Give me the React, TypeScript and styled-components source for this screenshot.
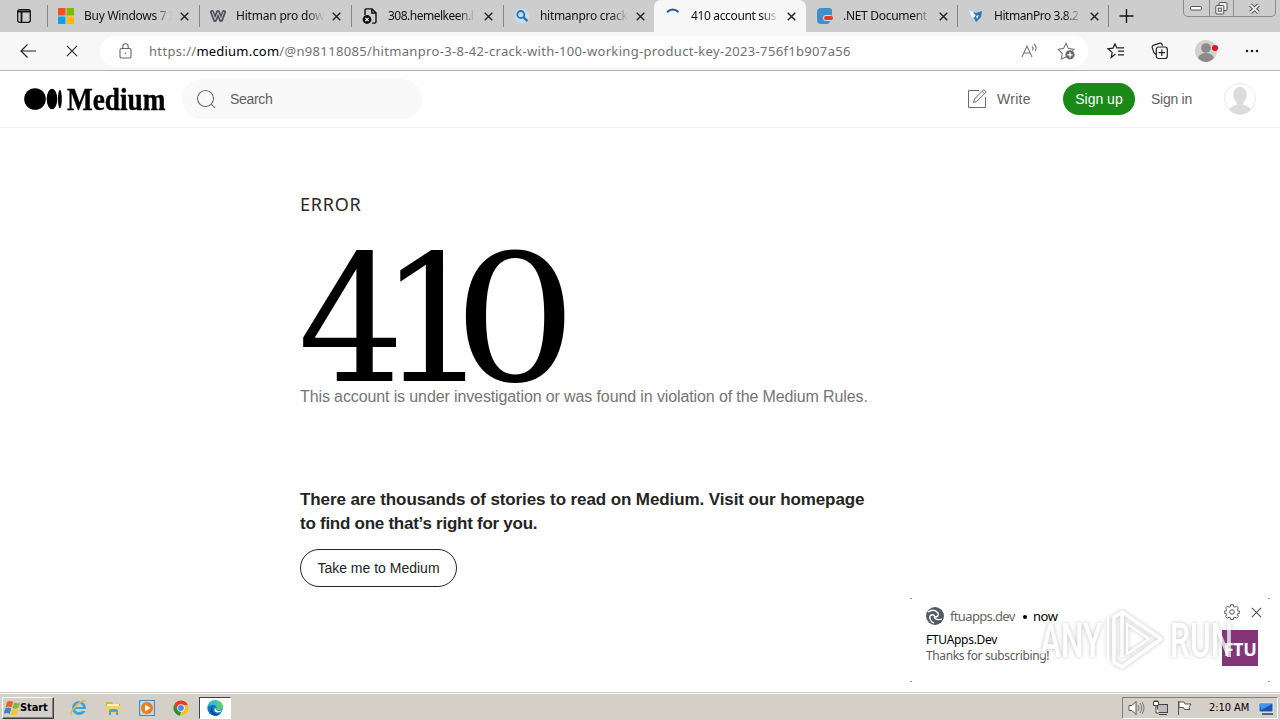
import React from 'react';
import styled, { createGlobalStyle, css } from 'styled-components';

const Global = createGlobalStyle`
  * { box-sizing: border-box; }
  body { margin: 0; background: #fff; overflow: hidden; }
`;

const ui = `'Noto Sans', 'Open Sans', sans-serif`;
const sans = `'Liberation Sans', Arial, sans-serif`;

const Screen = styled.div`
  width: 1280px;
  height: 720px;
  display: flex;
  flex-direction: column;
  background: #fff;
  overflow: hidden;
  position: relative;
  font-family: ${sans};
`;

/* Browser tabs */
const TabStrip = styled.div`
  height: 32px;
  flex: none;
  display: flex;
  background: #cdcdcd;
  font: 12px ${ui};
`;
const TabActions = styled.div`
  width: 47px;
  flex: none;
  padding: 9px 0 0 17px;
`;
const Tab = styled.div<{ $active?: boolean; $line?: boolean; $w: number }>`
  width: ${p => p.$w}px;
  flex: none;
  height: 32px;
  display: flex;
  align-items: center;
  padding-left: 10px;
  border-left: 1px solid transparent;
  ${p => p.$line && css`
    border-image: linear-gradient(#cdcdcd 6px, #858585 6px, #858585 26px, #cdcdcd 26px) 1;
  `}
  ${p => p.$active && css`
    background: #f7f7f7;
    border-radius: 7px 7px 0 0;
  `}
`;
const TabIcon = styled.span`
  width: 16px;
  height: 16px;
  flex: none;
  display: flex;
`;
const TabTitle = styled.span<{ $ls?: number }>`
  width: 88px;
  flex: none;
  margin-left: 10px;
  white-space: nowrap;
  color: #111;
  line-height: 18px;
  letter-spacing: ${p => p.$ls ?? 0}px;
  mask-image: linear-gradient(90deg, #000 80%, transparent 100%);
`;
const TabClose = styled.span`
  width: 12px;
  height: 12px;
  margin-left: 8px;
  display: flex;
  align-items: center;
`;
const NewTab = styled.div`
  width: 75px;
  flex: none;
  padding: 9px 0 0 10px;
  border-left: 1px solid;
  border-image: linear-gradient(#cdcdcd 6px, #858585 6px, #858585 26px, #cdcdcd 26px) 1;
`;
const WindowButtons = styled.div`
  width: 93px;
  height: 17px;
  display: flex;
  border: 1px solid #8b8b8b;
  border-top: 0;
  border-radius: 0 0 5px 5px;
`;
const WindowButton = styled.div<{ $w: number }>`
  width: ${p => p.$w}px;
  display: flex;
  align-items: center;
  justify-content: center;
  & + & { border-left: 1px solid #8b8b8b; }
`;

/* Browser toolbar */
const Toolbar = styled.div`
  height: 39px;
  flex: none;
  display: flex;
  align-items: center;
  background: #f7f7f7;
  border-bottom: 1px solid #b4b4b4;
  padding-left: 18px;
`;
const NavIcon = styled.span<{ $w?: number; $gap?: number }>`
  width: ${p => p.$w ?? 20}px;
  height: 20px;
  flex: none;
  margin-right: ${p => p.$gap ?? 0}px;
  display: flex;
  align-items: center;
  justify-content: center;
`;
const Address = styled.div`
  width: 988px;
  height: 31px;
  display: flex;
  align-items: center;
  background: #fff;
  border-radius: 16px;
  padding-left: 16px;
  margin-right: 18px;
`;
const Url = styled.span`
  flex: 1;
  margin-left: 13px;
  font: 13px/18px ${ui};
  letter-spacing: 0.335px;
  color: #707070;
  white-space: nowrap;
  b { font-weight: 400; color: #000; letter-spacing: 0.2px; }
`;

/* Site header */
const Header = styled.header`
  height: 57px;
  flex: none;
  display: flex;
  align-items: center;
  border-bottom: 1px solid #f2f2f2;
  padding: 0 24px;
`;
const Wordmark = styled.span`
  width: 98px;
  height: 31px;
  margin-left: 5px;
  font: bold 31px/32px 'Liberation Serif', serif;
  color: #000;
  transform: scaleX(0.88);
  transform-origin: 0 50%;
  -webkit-text-stroke: 0.4px #000;
`;
const SearchBox = styled.div`
  width: 240px;
  height: 40px;
  margin-left: 17px;
  padding-left: 12px;
  display: flex;
  align-items: center;
  gap: 12px;
  border-radius: 20px;
  background: #f9f9f9;
`;
const SmallText = styled.span<{ $ls?: number }>`
  font: 14px/20px ${sans};
  letter-spacing: ${p => p.$ls ?? 0}px;
  color: #5f5f5f;
  white-space: nowrap;
`;
const WriteLink = styled.div`
  display: flex;
  align-items: center;
  gap: 8px;
  margin-left: auto;
  width: 98px;
`;
const SignUp = styled.div`
  width: 72px;
  height: 32px;
  border-radius: 16px;
  background: #1a8917;
  color: #fff;
  font: 14px/32px ${sans};
  text-align: center;
  margin-right: 16px;
`;
const Avatar = styled.div`
  width: 32px;
  height: 32px;
  margin-left: 32px;
`;

/* Error page */
const Main = styled.main`
  flex: 1;
  padding: 63px 0 0 300px;
`;
const ErrorLabel = styled.div`
  font: 18px/26px ${ui};
  letter-spacing: 0.75px;
  color: #292929;
`;
const ErrorCode = styled.div`
  display: flex;
  height: 168px;
  margin: 12px 0 0 -2px;
  font: 176px/184px 'DejaVu Serif', serif;
  color: #000;
`;
const Digit = styled.span<{ $w: number; $stretch: number }>`
  width: ${p => p.$w}px;
  flex: none;
  transform: scaleX(${p => p.$stretch});
  transform-origin: 0 50%;
`;
const Reason = styled.div`
  font: 16px/24px ${sans};
  letter-spacing: -0.115px;
  color: #757575;
  white-space: nowrap;
  margin-top: -12px;
`;
const Invite = styled.div`
  margin-top: 79px;
  font: bold 17px/24px ${sans};
  letter-spacing: -0.1px;
  color: #242424;
  white-space: nowrap;
`;
const InviteEnd = styled.span`
  letter-spacing: -0.26px;
`;
const HomeButton = styled.div`
  width: 157px;
  height: 38px;
  margin-top: 13px;
  border: 1px solid #242424;
  border-radius: 19px;
  font: 14px/36px ${sans};
  color: #242424;
  text-align: center;
`;

/* Desktop notification */
const Toast = styled.aside`
  position: absolute;
  left: 910px;
  top: 598px;
  width: 360px;
  height: 84px;
  background:
    linear-gradient(#999, #999) 0 0 / 2px 1px,
    linear-gradient(#999, #999) 100% 0 / 2px 1px,
    linear-gradient(#999, #999) 0 100% / 2px 1px,
    linear-gradient(#999, #999) 100% 100% / 2px 1px,
    #fff;
  background-repeat: no-repeat;
  padding: 7px 10px 0 16px;
  display: flex;
  justify-content: space-between;
`;
const ToastOrigin = styled.div`
  display: flex;
  align-items: center;
  height: 21px;
  font: 13px/20px ${ui};
  color: #666;
  svg { margin-right: 6px; }
`;
const ToastSite = styled.span`
  width: 73px;
  letter-spacing: -0.65px;
`;
const ToastTime = styled.span`
  display: flex;
  gap: 6px;
  color: #000;
  letter-spacing: -0.5px;
  &::before {
    content: '';
    width: 4px;
    height: 4px;
    margin-top: 9px;
    border-radius: 50%;
    background: #000;
  }
`;
const ToastTitle = styled.div`
  font: 12px/16px ${ui};
  letter-spacing: -0.3px;
  color: #000;
  margin-top: 6px;
`;
const ToastBody = styled.div`
  font: 12px/15px ${ui};
  letter-spacing: -0.37px;
  color: #5c5c5c;
`;
const ToastSide = styled.div`
  width: 38px;
`;
const ToastControls = styled.div`
  display: flex;
  align-items: center;
  justify-content: space-between;
  width: 40px;
  height: 14px;
  padding-left: 2px;
  margin-bottom: 11px;
`;
const SiteBadge = styled.div`
  width: 36px;
  height: 36px;
  background: #843578;
  color: #fff;
  font: bold 18px/38px 'Open Sans', sans-serif;
  letter-spacing: -0.4px;
  text-align: center;
`;
const Watermark = styled.div`
  position: absolute;
  left: 1040px;
  top: 606px;
  width: 192px;
  height: 68px;
  display: flex;
  justify-content: space-between;
  align-items: center;
  filter: drop-shadow(0 0 2px rgba(90, 90, 90, 0.5));
  opacity: 0.72;
`;
const WatermarkWord = styled.span`
  width: 62px;
  height: 50px;
  font: 500 48px/52px Roboto, sans-serif;
  color: #fff;
  white-space: nowrap;
  transform: scaleX(0.66);
  transform-origin: 0 50%;
`;

/* Taskbar */
const Taskbar = styled.footer`
  height: 28px;
  flex: none;
  display: flex;
  align-items: center;
  background: #d4d0c8;
  border-top: 1px solid #d4d0c8;
  box-shadow: inset 0 1px #fff;
  padding: 2px 2px 0;
`;
const Start = styled.div`
  width: 52px;
  height: 22px;
  display: flex;
  align-items: center;
  margin-right: 8px;
  padding-left: 1px;
  border: 1px solid;
  border-color: #fff #404040 #404040 #fff;
  box-shadow: inset -1px -1px #808080;
  font: bold 11px/20px 'DejaVu Sans Condensed', 'DejaVu Sans', sans-serif;
  letter-spacing: -0.1px;
  color: #000;
`;
const StartLabel = styled.span`
  margin-left: -1px;
`;
const Launch = styled.span<{ $active?: boolean }>`
  width: 34px;
  height: 22px;
  display: flex;
  align-items: center;
  justify-content: center;
  ${p => p.$active && css`
    width: 32px;
    margin-left: 1px;
    background: #fff;
    border: 1px solid;
    border-color: #404040 #fff #fff #404040;
  `}
`;
const Tray = styled.div`
  width: 156px;
  height: 22px;
  margin-left: auto;
  display: flex;
  align-items: center;
  border: 1px solid;
  border-color: #808080 #fff #fff #808080;
  padding: 0 1px 0 5px;
  gap: 7px;
`;
const Clock = styled.span`
  width: 42px;
  margin-left: 9px;
  font: 11px/20px 'DejaVu Sans Condensed', sans-serif;
  letter-spacing: -0.05px;
  color: #000;
  white-space: nowrap;
`;

type CrossProps = { size?: number; color?: string; width?: number };
const Cross = ({ size = 10, color = '#222', width = 1.6 }: CrossProps) => (
  <svg width={size} height={size} viewBox="0 0 10 10" stroke={color} strokeWidth={width} fill="none">
    <path d="M.8.8l8.4 8.4M9.2.8L.8 9.2" />
  </svg>
);

const icons = {
  windows: (
    <svg width="16" height="16"><path fill="#f25022" d="M0 0h7.5v7.5H0z" /><path fill="#7fba00" d="M8.5 0H16v7.5H8.5z" /><path fill="#00a4ef" d="M0 8.5h7.5V16H0z" /><path fill="#ffb900" d="M8.5 8.5H16V16H8.5z" /></svg>
  ),
  weebly: (
    <svg width="16" height="16" fill="none" strokeLinejoin="round" strokeLinecap="round">
      <path d="M2 4l3 8 3-8 3 8 3-8" stroke="#4c505c" strokeWidth="4" /><path d="M2.3 4.3L5 11.5 8 4.5l3 7 2.7-7.2" stroke="#cdcdcd" strokeWidth="1" />
    </svg>
  ),
  page: (
    <svg width="16" height="16" fill="none" stroke="#111" strokeWidth="1.4">
      <path d="M3 7V2.2Q3 .9 4.3.9H10l4 4v8.8q0 1.4-1.4 1.4H10M9.8 1v4H14" /><circle cx="5" cy="11.5" r="4.4" fill="#111" stroke="none" /><path d="M3.4 9.9l3.2 3.2M6.6 9.9l-3.2 3.2" stroke="#fff" strokeWidth="1.1" />
    </svg>
  ),
  search: (
    <svg width="16" height="16" fill="none"><circle cx="8" cy="8" r="7.5" fill="#c4dced" /><circle cx="6.8" cy="6.5" r="3.5" stroke="#2476b5" strokeWidth="1.8" /><path d="M9.4 9.1l4 4" stroke="#2476b5" strokeWidth="2.2" /></svg>
  ),
  loading: (
    <svg width="16" height="16" fill="none"><path d="M2 4.2Q7.5-1 13.5 4" stroke="#185a9c" strokeWidth="2" /></svg>
  ),
  net: (
    <svg width="18" height="16"><path d="M4 0h8q3 0 3 3v8.5L11 16H4q-4 0-4-4V4q0-4 4-4z" fill="#3f8fca" /><rect x="6" y="7" width="10" height="6" rx="3" fill="#c7dfee" /><rect x="7" y="8" width="9" height="4" rx="2" fill="#e43b18" /></svg>
  ),
  hitman: (
    <svg width="16" height="16"><path d="M0 1l7 3 8-2-1 7-6 6-5-4z" fill="#b9d0df" /><path d="M4 4l4 1 6-2-1 6-5 5-2-4 2-3z" fill="#3479a5" /><path d="M1 2l4 2 2 4-3 2z" fill="#f4f8fa" /><path d="M8 8l3-1-2 4z" fill="#e0edf4" /></svg>
  ),
};

type TabData = { icon: React.ReactNode; title: string; w: number; line?: boolean; active?: boolean; ls?: number };
const tabs: TabData[] = [
  { icon: icons.windows, title: 'Buy Windows 7 I', w: 152, line: true, ls: -0.25 },
  { icon: icons.weebly, title: 'Hitman pro dow', w: 152, line: true, ls: -0.2 },
  { icon: icons.page, title: '308.hemelkeen.l', w: 152, line: true, ls: -0.5 },
  { icon: icons.search, title: 'hitmanpro crack', w: 151, line: true, ls: -0.3 },
  { icon: icons.loading, title: '410 account sus', w: 152, active: true, ls: -0.35 },
  { icon: icons.net, title: '.NET Document', w: 151, ls: -0.3 },
  { icon: icons.hitman, title: 'HitmanPro 3.8.2', w: 151, line: true, ls: -0.45 },
];

const Gear = () => (
  <svg width="16" height="16" viewBox="0 0 16 16" fill="none" stroke="#555" strokeWidth="1">
    <path d="M6.7.7h2.6l.4 2 1.2.5 1.7-1.1 1.8 1.8-1.1 1.7.5 1.2 2 .4v1.9l-2 .4-.5 1.2 1.1 1.7-1.8 1.8-1.7-1.1-1.2.5-.4 1.9H6.7l-.4-1.9-1.2-.5-1.7 1.1-1.8-1.8 1.1-1.7-.5-1.2-2-.4V7.2l2-.4.5-1.2-1.1-1.7 1.8-1.8 1.7 1.1 1.2-.5z" /><circle cx="8" cy="8" r="2.3" />
  </svg>
);

export default function App() {
  return (
    <Screen>
      <Global />
      <TabStrip>
        <TabActions>
          <svg width="14" height="14" fill="none" stroke="#111" strokeWidth="1.3"><rect x=".7" y=".7" width="12.6" height="12.6" rx="2" /><path d="M1 2.5h12M4.5 3v10" strokeWidth="1.8" /></svg>
        </TabActions>
        {tabs.map(t => (
          <Tab key={t.title} $w={t.w} $line={t.line} $active={t.active}>
            <TabIcon>{t.icon}</TabIcon>
            <TabTitle $ls={t.ls}>{t.title}</TabTitle>
            <TabClose><Cross size={9} /></TabClose>
          </Tab>
        ))}
        <NewTab><svg width="15" height="14" stroke="#111" strokeWidth="1.4"><path d="M7.5 0v14M.5 7h14" /></svg></NewTab>
        <WindowButtons>
          <WindowButton $w={25}><svg width="13" height="5"><rect x=".5" y=".5" width="11" height="3.5" rx="1" fill="#fff" stroke="#555" /></svg></WindowButton>
          <WindowButton $w={25}>
            <svg width="13" height="13" fill="#eee" stroke="#555"><rect x="4" y=".5" width="8" height="8" rx="1" /><rect x=".8" y="3.5" width="8" height="8.5" rx="1" /><rect x="3.4" y="6.2" width="3" height="3" /></svg>
          </WindowButton>
          <WindowButton $w={42}>
            <svg width="13" height="11" fill="none"><path d="M2.5 2l8 7.5M10.5 2l-8 7.5" stroke="#555" strokeWidth="3.8" /><path d="M2.5 2l8 7.5M10.5 2l-8 7.5" stroke="#eee" strokeWidth="1.8" /></svg>
          </WindowButton>
        </WindowButtons>
      </TabStrip>

      <Toolbar>
        <NavIcon $gap={24}><svg width="16" height="14" fill="none" stroke="#222" strokeWidth="1.2"><path d="M16 7H1M7.5.5L1 7l6.5 6.5" /></svg></NavIcon>
        <NavIcon $gap={18}><Cross size={12} width={0.9} /></NavIcon>
        <Address>
          <NavIcon>
            <svg width="14" height="16" fill="none" stroke="#666" strokeWidth="1.1"><rect x="1" y="5.5" width="11" height="9.5" rx="1.5" /><path d="M3.8 5.5V3.4a2.7 2.7 0 015.4 0v2.1" /><circle cx="6.5" cy="10.2" r=".8" fill="#666" stroke="none" /></svg>
          </NavIcon>
          <Url>https://<b>medium.com</b>/@n98118085/hitmanpro-3-8-42-crack-with-100-working-product-key-2023-756f1b907a56</Url>
          <NavIcon $gap={16}>
            <svg width="18" height="16" fill="none" stroke="#777" strokeWidth="1.1"><path d="M1 14L6 3l5 11M2.8 10h6.4M11 3.5q1.8 1.7.5 4M13 1q3.5 3 1.2 7" /></svg>
          </NavIcon>
          <NavIcon $gap={12}>
            <svg width="19" height="18" fill="none" stroke="#777" strokeWidth="1.1"><path d="M9 15l-4.7 2 1-5.5L1.2 7.3l5.4-.9L9 1.2l2.4 5.2 5.6.9-1.8 1.5" /><circle cx="13" cy="12.8" r="4.6" fill="#666" stroke="none" /><path d="M13 10.2v5.2M10.4 12.8h5.2" stroke="#fff" strokeWidth="1.3" /></svg>
          </NavIcon>
        </Address>
        <NavIcon $gap={24}>
          <svg width="18" height="16" fill="none" stroke="#222" strokeWidth="1.2"><path d="M8.5 11L4.2 14.5l1-5.1L1 5.8l5-.7L8 .9l1.8 4H17M11 8.2h6M11 11.8h6" /></svg>
        </NavIcon>
        <NavIcon $gap={24}>
          <svg width="18" height="18" fill="none" stroke="#222" strokeWidth="1.2"><path d="M5 12.5L2.8 10.5 1.2 5.4q-.3-1.5 1-2L9 1.2q1.4-.3 2 1l.5 1.5" /><rect x="5.3" y="5" width="11" height="11.5" rx="2.2" /><path d="M10.8 7.5v6.4M7.6 10.7H14" /></svg>
        </NavIcon>
        <NavIcon $w={24} $gap={24}>
          <svg width="24" height="24"><circle cx="12" cy="12" r="11" fill="#d3d0cd" /><circle cx="12" cy="9" r="4.8" fill="#8b8b8b" /><path d="M4 19q2-5 8-5t8 5q-8 8-16 0z" fill="#8b8b8b" /><circle cx="21" cy="9" r="3" fill="#e81123" /></svg>
        </NavIcon>
        <NavIcon><svg width="14" height="4" fill="#222"><circle cx="2" cy="2" r="1.3" /><circle cx="7" cy="2" r="1.3" /><circle cx="12" cy="2" r="1.3" /></svg></NavIcon>
      </Toolbar>

      <Header>
        <svg width="38" height="22"><circle cx="11" cy="11" r="10.8" /><ellipse cx="28" cy="11" rx="5.3" ry="10.3" /><ellipse cx="35.9" cy="11" rx="1.9" ry="9.3" /></svg>
        <Wordmark>Medium</Wordmark>
        <SearchBox>
          <svg width="24" height="24" fill="none" stroke="#6b6b6b" strokeWidth="1.1"><circle cx="11.5" cy="11.5" r="8" /><path d="M17.2 17.2l4 4" /></svg>
          <SmallText $ls={-0.3}>Search</SmallText>
        </SearchBox>
        <WriteLink>
          <svg width="24" height="24" fill="none" stroke="#6b6b6b" strokeWidth="1"><path d="M14 3.5H3.5v17h17V10" /><path d="M8.5 15.5l1-3.6L18.8 2.6l2.4 2.4-9.3 9.3zM17 4.3l2.4 2.4" /></svg>
          <SmallText $ls={0.3}>Write</SmallText>
        </WriteLink>
        <SignUp>Sign up</SignUp>
        <SmallText $ls={-0.25}>Sign in</SmallText>
        <Avatar>
          <svg width="32" height="32"><circle cx="16" cy="16" r="15.5" fill="#fff" stroke="#e8e8e8" /><ellipse cx="16" cy="12" rx="6.7" ry="8.2" fill="#dcdcdc" /><path d="M12.5 18h7v4q6 1.5 7.5 4.5Q22 31.5 16 31.5T5 26.5q1.5-3 7.5-4.5z" fill="#dcdcdc" /></svg>
        </Avatar>
      </Header>

      <Main>
        <ErrorLabel>ERROR</ErrorLabel>
        <ErrorCode>
          <Digit $w={81} $stretch={0.95}>4</Digit>
          <Digit $w={74} $stretch={0.99}>1</Digit>
          <Digit $w={112} $stretch={1.11}>0</Digit>
        </ErrorCode>
        <Reason>This account is under investigation or was found in violation of the Medium Rules.</Reason>
        <Invite>
          There are thousands of stories to read on Medium. Visit our homepage<br />
          <InviteEnd>to find one that’s right for you.</InviteEnd>
        </Invite>
        <HomeButton>Take me to Medium</HomeButton>
      </Main>

      <Taskbar>
        <Start>
          <svg width="17" height="16"><path d="M3 2q3-2 6 0L7.5 7.5q-3-1.8-6 0z" fill="#e8602c" /><path d="M10 2.5q3 1.4 6 0L14.4 8q-3 1.4-6 0z" fill="#83b83f" /><path d="M1.2 8.5q3-2 6 0L5.7 14q-3-2-6 0z" fill="#3b84cc" /><path d="M8.2 9q3 1.6 6 0l-1.5 5.5q-3 1.5-6 0z" fill="#f6c237" /></svg>
          <StartLabel>Start</StartLabel>
        </Start>
        <Launch>
          <svg width="18" height="18" fill="none"><circle cx="9" cy="9" r="5.5" stroke="#39a4e0" strokeWidth="3" /><path d="M5 9h9" stroke="#39a4e0" strokeWidth="2" /><path d="M12 11h5" stroke="#d4d0c8" strokeWidth="2" /><path d="M2 15q-3 0 3-7T16 2" stroke="#e8b93c" strokeWidth="1.5" /></svg>
        </Launch>
        <Launch>
          <svg width="17" height="16"><path d="M1 2h6l1 2h7v9H1z" fill="#d9b14c" /><path d="M2 4h12v3H2z" fill="#fff3bd" /><path d="M1 6h15v8H1z" fill="#f0d272" /><path d="M4 15v-4q0-2 2-2h5q2 0 2 2v4h-2v-3H6v3z" fill="#4ba5d6" /></svg>
        </Launch>
        <Launch>
          <svg width="16" height="16"><rect x=".5" y=".5" width="15" height="15" fill="#b8d8ee" stroke="#4987b5" /><circle cx="8" cy="8" r="6" fill="#ef7d14" /><path d="M6 4.5l5.5 3.5L6 11.5z" fill="#fff" /></svg>
        </Launch>
        <Launch>
          <svg width="16" height="16"><circle cx="8" cy="8" r="7.5" fill="#fbc116" /><path d="M1.5 4.2A7.5 7.5 0 0114.8 5H8L5 9.5z" fill="#e33b2e" /><path d="M1.5 4.2L5 10l3 1.5-1 4A7.5 7.5 0 011.5 4.2z" fill="#229342" /><circle cx="8" cy="8" r="3.7" fill="#fff" /><circle cx="8" cy="8" r="2.9" fill="#4285f4" /></svg>
        </Launch>
        <Launch $active>
          <svg width="16" height="16"><circle cx="8" cy="8" r="7.7" fill="#1376c8" /><path d="M.5 7Q2 .3 8.5.3q7.2.7 7.2 6.6Q15 10.5 11 10.3q-2-.2-1.3-1.8Q9.5 5.4 6 5 2.5 4.8.5 7z" fill="#35bfcf" /><path d="M10 .6q5.600 1.6 5.7 6.3-.7 3.5-4.7 3.4-2-.2-1.3-1.8 2-3-.5-5.5z" fill="#5ecb70" /><path d="M6 6q-2 4 1.5 7 3 2 6.5.2-4 4.3-9 1.3-4-4 1-8.5z" fill="#0b4d96" /><path d="M9.5 8.5q-1.5 2 1.5 2.4 2.5.3 4-.7-1.5 2.5-4.5 2.3-4-.5-2.8-4.3z" fill="#fff" /></svg>
        </Launch>
        <Tray>
          <svg width="17" height="16" fill="#fff" stroke="#555"><path d="M1 5.5h3l4-4v13l-4-4H1z" /><path d="M10 5q2 3 0 6M12 3q3.5 5 0 10M14 2q4 6 0 12" fill="none" stroke="#777" /></svg>
          <svg width="17" height="16" fill="#fff" stroke="#444"><rect x="5.5" y="4.5" width="10" height="8" fill="#bbb" /><path d="M7 14.5h8M1.5 1.5h5v4h-5zM3 0v2M5 0v2M4 6v7h3" /></svg>
          <svg width="17" height="16" fill="#fff" stroke="#555"><path d="M2.5 1v14M3 2h5l1 2h6l-2 3.5 1 2H8.5l-1-2H3z" /></svg>
          <Clock>2:10 AM</Clock>
          <svg width="17" height="16"><path d="M1 3h14v9H1z" fill="#1756b4" stroke="#d5e8fa" /><path d="M2 4h12L3 10z" fill="#4a94e8" /><path d="M4 14h11" stroke="#27415e" strokeWidth="1.5" /></svg>
        </Tray>
      </Taskbar>

      <Toast>
        <div>
          <ToastOrigin>
            <svg width="18" height="18"><circle cx="9" cy="9" r="9" fill="#555b62" /><path d="M2 5q6-4 10 1 1 4-3 4-2-4-5-1-1 5 4 7" fill="none" stroke="#fff" strokeWidth="1.4" /><path d="M8 10q2 4 8 2" fill="none" stroke="#fff" strokeWidth="1.3" /></svg>
            <ToastSite>ftuapps.dev</ToastSite>
            <ToastTime>now</ToastTime>
          </ToastOrigin>
          <ToastTitle>FTUApps.Dev</ToastTitle>
          <ToastBody>Thanks for subscribing!</ToastBody>
        </div>
        <ToastSide>
          <ToastControls><Gear /><Cross size={11} color="#555" width={1} /></ToastControls>
          <SiteBadge>FTU</SiteBadge>
        </ToastSide>
      </Toast>
      <Watermark>
        <WatermarkWord>ANY</WatermarkWord>
        <svg width="58" height="66" fill="none" stroke="#fff" strokeLinejoin="round"><path d="M15 50V5l39 27-39 28-8-5V10l8-5" strokeWidth="3.5" /><path d="M20 17l22 15-22 15z" strokeWidth="2.5" /><path d="M1 10v42" strokeWidth="2" /></svg>
        <WatermarkWord>RUN</WatermarkWord>
      </Watermark>
    </Screen>
  );
}
